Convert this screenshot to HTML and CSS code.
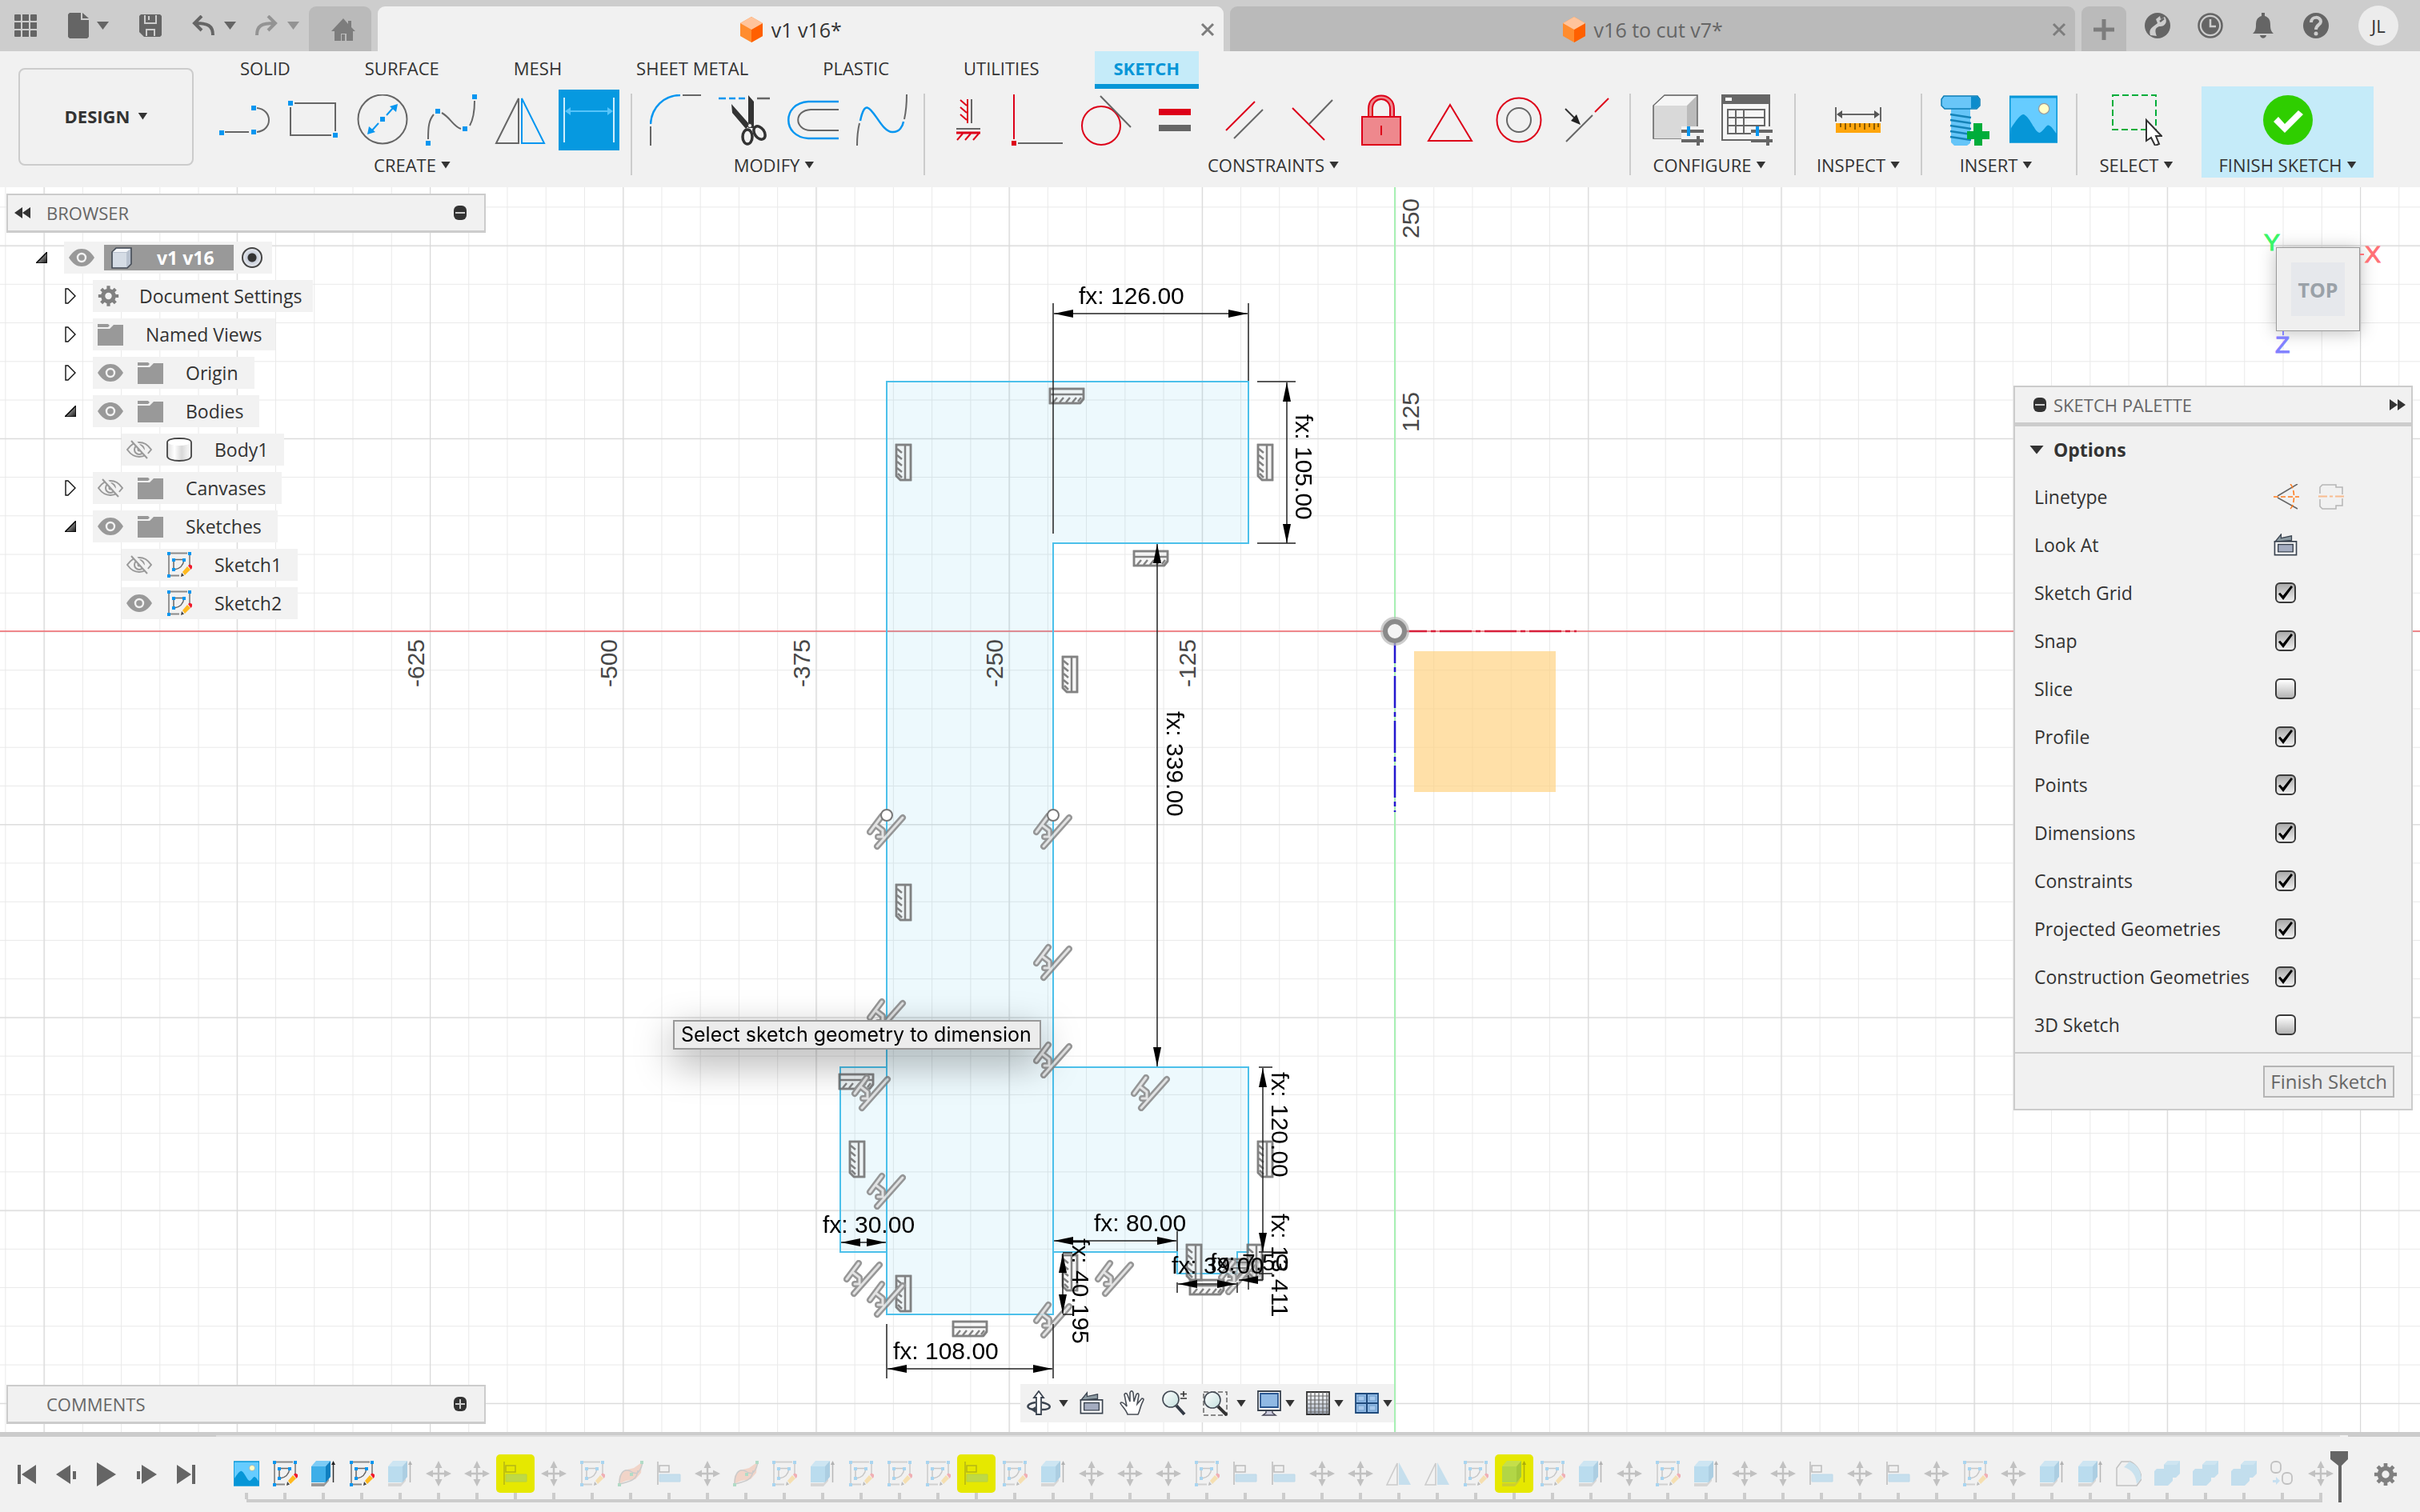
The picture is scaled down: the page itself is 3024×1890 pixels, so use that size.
FILE: index.html
```html
<!DOCTYPE html>
<html lang="en">
<head>
<meta charset="utf-8">
<title>v1 v16*</title>
<link rel="stylesheet" href="styles.css">
</head>
<body>

<svg class="defs" aria-hidden="true">
  <defs>
    <linearGradient id="steel" x1="0" y1="0" x2="0" y2="1"><stop offset="0" stop-color="#fff"/><stop offset="1" stop-color="#aab4c4"/></linearGradient>
    <linearGradient id="glass" x1="0" y1="0" x2="1" y2="1"><stop offset="0" stop-color="#fff"/><stop offset="1" stop-color="#c4e0de"/></linearGradient>
    <linearGradient id="dusk" x1="0" y1="0" x2="1" y2="1"><stop offset="0" stop-color="#eee"/><stop offset="1" stop-color="#111"/></linearGradient>
    <linearGradient id="barrel" x1="0" y1="0" x2="1" y2="0"><stop offset="0" stop-color="#ddd"/><stop offset=".3" stop-color="#fff"/><stop offset=".6" stop-color="#d8d8d8"/><stop offset="1" stop-color="#fff"/></linearGradient>
  </defs>
  <symbol id="i-cube" viewBox="0 0 28 32"><path d="M14 0 28 8V24L14 32 0 24V8Z" fill="#ff8c2e"/><path d="M14 16 28 8V24L14 32Z" fill="#ff6000"/><path d="M14 0 28 8 14 16 0 8Z" fill="#ffc49c"/></symbol>
  <symbol id="i-close" viewBox="0 0 18 18"><path d="M2 2 16 16M16 2 2 16" stroke="#7d7d7d" stroke-width="3"/></symbol>
  <symbol id="i-eye" viewBox="0 0 32 24"><path d="M0 12C5 4 10 1 16 1s11 3 16 11c-5 8-10 11-16 11S5 20 0 12Z" fill="#999"/><circle cx="16" cy="12" r="5" fill="#999" stroke="#f2f2f2" stroke-width="2.4"/></symbol>
  <symbol id="i-eyeoff" viewBox="0 0 32 24"><path d="M1 12C6 5 10 3 16 3s10 2 15 9c-5 7-9 9-15 9S6 19 1 12Z" fill="none" stroke="#999" stroke-width="2"/><path d="M10 12a6 6 0 0 1 12 0 6 6 0 0 1-12 0Z" fill="none" stroke="#999" stroke-width="2"/><circle cx="16" cy="12" r="2.5" fill="#999"/><path d="M8 0 28 22" stroke="#f2f2f2" stroke-width="5"/><path d="M6 1 26 23" stroke="#999" stroke-width="2"/></symbol>
  <symbol id="i-folder" viewBox="0 0 32 28"><path d="M0 1H13L15 3 13 5H0ZM0 7H15L20 2H32V28H0Z" fill="#999"/></symbol>
  <symbol id="i-gear" viewBox="0 0 32 32"><circle cx="16" cy="16" r="8" fill="none" stroke="currentColor" stroke-width="6"/><path d="M16 1V8M16 24v7M1 16H8M24 16h7M5.500 5.500 10 10M22 22l4.500 4.500M5.500 26.500 10 22M22 10l4.500-4.500" stroke="currentColor" stroke-width="5"/></symbol>
  <symbol id="i-open" viewBox="0 0 14 14"><path d="M14 0V14H0Z" fill="url(#dusk)" stroke="#000" stroke-width="1.500"/></symbol>
  <symbol id="i-shut" viewBox="0 0 14 20"><path d="M1 1H4L13 10 4 19H1Z" fill="#fff" stroke="#111" stroke-width="1.400"/></symbol>
  <symbol id="i-component" viewBox="0 0 28 28"><path d="M2 7 7 2H26V22L21 27H2Z" fill="#b9c2cf" stroke="#444b55" stroke-width="1.600"/><path d="M3 8H20V26H3Z" fill="#d5dce5"/><path d="M3 7 8 3H25L20 7Z" fill="#f5f7fa"/></symbol>
  <symbol id="i-body" viewBox="0 0 32 30"><path d="M1 6C1 2 8 1 16 1s15 1 15 5V23c0 4-7 6-15 6S1 27 1 23Z" fill="url(#barrel)" stroke="#444" stroke-width="1.800"/><ellipse cx="16" cy="6" rx="14" ry="4" fill="#fff"/></symbol>
  <symbol id="i-sketch" viewBox="0 0 32 32"><path d="M3 4V30M5 1.500H26M29 4V18M4 29.500H16" stroke="#8a8a8a" stroke-width="1.800" fill="none"/><path d="M9 10V22M11 9.500H21M22 10C21 16 17 21 10 22" stroke="#666" stroke-width="1.500" fill="none"/><g fill="#0696f0"><path d="M1 0h4v4H1zM27 0h4v4h-4zM1 28h4v4H1zM7 8h4v4H7zM20 8h4v4h-4zM7 20h4v4H7z"/></g><path d="M18 31 19 26 22 29.500Z" fill="#444"/><path d="M20 25 26 18 30 22 23 29Z" fill="#ffb91f"/><path d="M27 17 29 15.500 32 17V20L30.500 22Z" fill="#f01a2c"/></symbol>
  <symbol id="i-picture" viewBox="0 0 32 32"><path d="M0 1H32V31H0Z" fill="#66ccff"/><path d="M0 1H32V31H0Z" fill="none" stroke="#0696d7" stroke-width="1.600"/><ellipse cx="23" cy="9" rx="3.500" ry="3.500" fill="#ffffc8" stroke="#999" stroke-width=".6"/><path d="M1 22C5 16 8 12 10 13c4 2 7 12 10 12 3-1 4-5 6-5 3 1 4 5 6 6V31H0Z" fill="#0696d7"/></symbol>
  <symbol id="i-extrude" viewBox="0 0 32 32"><path d="M1 28H17L23 22V25L17 32H1Z" fill="#9a9a9a"/><path d="M1 7 7 0H25L20 7Z" fill="#7ccbf5"/><path d="M1 7H19V27H1Z" fill="#3eaee8"/><path d="M19 7 25 0V20L19 27Z" fill="#0f7fc0"/><path d="M28.500 27V4" stroke="#333" stroke-width="1.500"/><path d="M26 5 28.500 0 31 5Z" fill="#222"/></symbol>
  <symbol id="i-move" viewBox="0 0 32 32"><path d="M16 4V28M4 16H28" stroke="#555" stroke-width="2.400"/><path d="M16 0 20.500 9H11.500ZM16 32 20.500 23H11.500ZM0 16 9 11.500V20.500ZM32 16 23 11.500V20.500Z" fill="#555"/></symbol>
  <symbol id="i-align" viewBox="0 0 32 32"><path d="M2 1V30" stroke="#444" stroke-width="1.500"/><path d="M4 6H16V14H4Z" fill="none" stroke="#444" stroke-width="1.500"/><path d="M4 17H30V26H4Z" fill="#64b9e6" stroke="#4aa5d8"/></symbol>
  <symbol id="i-patch" viewBox="0 0 32 32"><path d="M1 29 2 19 8 12 20 9 30 2 29 15 22 23 10 25Z" fill="#f4946c"/><path d="M2 29C2 18 6 8 16 13 20 16 27 20 31 2M3 29C14 26 24 25 25 12" fill="none" stroke="#777" stroke-width="1.500"/><path d="M0 28h4v4H0zM15 15h4v4h-4zM28 0h4v4h-4z" fill="#22aa66"/></symbol>
  <symbol id="i-mirror" viewBox="0 0 32 32"><path d="M1 30 14 3V30Z" fill="#f6f6f6" stroke="#777" stroke-width="1.600"/><path d="M16 30V2L31 30Z" fill="#64b9e6"/></symbol>
  <symbol id="i-fillet" viewBox="0 0 32 32"><path d="M1 9 7 1H18C26 5 32 14 32 23L26 31H1Z" fill="#eee" stroke="#555" stroke-width="1.500"/><path d="M10 8 17 1C27 5 31 12 32 22L26 29C25 18 20 11 10 8Z" fill="#74c1ea"/></symbol>
  <symbol id="i-combine" viewBox="0 0 32 32"><path d="M0 13 3 10H12V5L17 0H32V16L27 21H23V25L17 31H0Z" fill="#58b4e6"/><path d="M12 5 17 0H32L28 5Z" fill="#80caf2"/></symbol>
  <symbol id="i-paste" viewBox="0 0 32 32"><rect x="2" y="1" width="12" height="14" rx="5" fill="#eee" stroke="#555" stroke-width="1.800"/><rect x="16" y="15" width="12" height="14" rx="5" fill="#eee" stroke="#555" stroke-width="1.800"/><path d="M4 18V24H8V20L13 25 8 30V27H4Z" fill="#6cbcf0"/></symbol>
  <symbol id="i-lookat" viewBox="0 0 32 30"><path d="M2 11 10 1V6L24 3V9Z" fill="#8d9ba3" stroke="#3b4450" stroke-width="1.400"/><path d="M1.500 10.500H30.500V28.500H1.500Z" fill="#fff" stroke="#3b4450" stroke-width="1.800"/><path d="M6 14.500H26V24.500H6Z" fill="#a4acc0" stroke="#3b4450" stroke-width="1.500"/></symbol>
  <symbol id="i-minus" viewBox="0 0 18 18"><rect x="1" y="0" width="16" height="18" rx="6" fill="#333"/><path d="M3 9H15" stroke="#ccc" stroke-width="2"/></symbol>
  <symbol id="i-plusdot" viewBox="0 0 18 18"><rect x="1" y="0" width="16" height="18" rx="6" fill="#333"/><path d="M3 9H15M9 3V15" stroke="#ccc" stroke-width="2"/></symbol>
  <symbol id="i-rewind" viewBox="0 0 20 14"><path d="M10 0V14L0 7ZM20 0V14L10 7Z" fill="#333"/></symbol>
  <symbol id="i-forward" viewBox="0 0 20 14"><path d="M10 0V14L20 7ZM0 0V14L10 7Z" fill="#333"/></symbol>
</svg>

<header class="topbar">
  <div class="tools">
    <button aria-label="Data panel"><svg width="28" height="28"><g fill="#656565"><rect width="8" height="8" rx="1"/><rect x="10" width="8" height="8"/><rect x="20" width="8" height="8" rx="1"/><rect y="10" width="8" height="8"/><rect x="10" y="10" width="8" height="8"/><rect x="20" y="10" width="8" height="8"/><rect y="20" width="8" height="8" rx="1"/><rect x="10" y="20" width="8" height="8"/><rect x="20" y="20" width="8" height="8" rx="1"/></g></svg></button>
    <button aria-label="File"><svg width="28" height="32"><path d="M3 0H17V9H27V30L25 32H3L1 30V2ZM19 0 27 7H19Z" fill="#656565"/></svg><span class="caret big"></span></button>
    <button aria-label="Save"><svg width="28" height="28"><path d="M2 0H26L28 2V26L26 28H6L0 22V2Z" fill="#656565"/><path d="M7 1V11H21V1M12 2V7M9 27V19H19V27" fill="none" stroke="#cdcdcd" stroke-width="2"/></svg></button>
    <div class="undo">
      <button aria-label="Undo"><svg width="28" height="26"><path d="M26 25C26 13 20 10 4 10M12 1 3 10 12 19" fill="none" stroke="#656565" stroke-width="4"/></svg><span class="caret big"></span></button>
      <button class="off" aria-label="Redo"><svg width="28" height="26"><path d="M2 25C2 13 8 10 24 10M16 1 25 10 16 19" fill="none" stroke="#656565" stroke-width="4"/></svg><span class="caret big"></span></button>
    </div>
  </div>
  <nav class="doctabs">
    <button class="doctab home" aria-label="Home"><svg width="30" height="28"><path d="M15 0 21 7V3H25V11L30 16H27V28H19V19H12V28H4V16H0Z" fill="#7d7d7d"/><path d="M13 28V20H17V28Z" fill="#7d7d7d"/></svg></button>
    <div class="doctab active"><span class="title"><svg width="28" height="32"><use href="#i-cube"/></svg>v1 v16*</span><button aria-label="Close"><svg width="18" height="18"><use href="#i-close"/></svg></button></div>
    <div class="doctab"><span class="title"><svg width="28" height="32"><use href="#i-cube"/></svg>v16 to cut v7*</span><button aria-label="Close"><svg width="18" height="18"><use href="#i-close"/></svg></button></div>
    <button class="doctab plus" aria-label="New tab"><svg width="26" height="26"><path d="M13 0V26M0 13H26" stroke="#7d7d7d" stroke-width="5"/></svg></button>
  </nav>
  <div class="account">
    <button aria-label="Extensions"><svg width="32" height="32"><circle cx="16" cy="16" r="16" fill="#656565"/><path d="M7 28C4 20 11 17 16 13L14 8 19 4 20 8 25 5C30 12 24 18 18 17 12 19 13 24 15 29Z" fill="#cdcdcd"/><path d="M19 11 24 7" stroke="#656565" stroke-width="2.500"/></svg></button>
    <button aria-label="Job status"><svg width="32" height="32"><circle cx="16" cy="16" r="14.500" fill="none" stroke="#656565" stroke-width="2.500"/><circle cx="16" cy="16" r="11" fill="#656565"/><path d="M16 8V17H23" fill="none" stroke="#cdcdcd" stroke-width="2.500"/></svg></button>
    <button aria-label="Notifications"><svg width="32" height="32"><path d="M14 0H18V4C24 6 25 10 25 16 25 22 27 24 29 26H3C5 24 7 22 7 16 7 10 8 6 14 4ZM12 28H20C19 33 13 33 12 28Z" fill="#656565"/></svg></button>
    <button aria-label="Help"><svg width="32" height="32"><circle cx="16" cy="16" r="16" fill="#656565"/><path d="M10 12C10 4 22 4 22 11 22 15 16 15 16 21" fill="none" stroke="#cdcdcd" stroke-width="4"/><circle cx="16" cy="26" r="2.500" fill="#cdcdcd"/></svg></button>
    <button class="avatar">JL</button>
  </div>
</header>

<section class="ribbon">
  <button class="design">DESIGN <span class="caret"></span></button>
  <div class="ribbon-main">
    <nav class="tabs">
      <a href="#solid">SOLID</a><a href="#surface">SURFACE</a><a href="#mesh">MESH</a><a href="#sheet">SHEET METAL</a><a href="#plastic">PLASTIC</a><a href="#utilities">UTILITIES</a><a href="#sketch" class="on">SKETCH</a>
    </nav>
    <div class="groups">
      <div class="group create">
        <div class="icons">
          <button aria-label="Line"><svg width="64" height="64" fill="none" stroke="#666" stroke-width="2"><path d="M7 47H37M47 47C67 45 67 19 47 17"/><path d="M0 45h6v6H0zM40 44h6v6h-6zM40 14h6v6h-6z" fill="#0696f0" stroke="none"/></svg></button>
          <button aria-label="Rectangle"><svg width="64" height="64" fill="none" stroke="#666" stroke-width="2"><path d="M8 11H59V46M3 16V51H54"/><path d="M0 8h6v6H0zM56 48h6v6h-6z" fill="#0696f0" stroke="none"/></svg></button>
          <button aria-label="Circle"><svg width="64" height="64" fill="none" stroke="#666" stroke-width="2"><circle cx="32" cy="31" r="30.500"/><path d="M37 26 46 16M27 36 18 46" stroke="#0696f0"/><path d="M29 28h6v6h-6zM51 12 49 22 41 15ZM13 50 15 40 23 47Z" fill="#0696f0" stroke="none"/></svg></button>
          <button aria-label="Spline"><svg width="64" height="64" fill="none" stroke="#666" stroke-width="2"><path d="M3 56C3 40 4 32 10 25M20 23C31 29 34 40 44 43M55 39C60 30 61 18 61 8"/><path d="M0 58h6v6H0zM12 18h6v6h-6zM46 40h6v6h-6zM58 0h6v6h-6z" fill="#0696f0" stroke="none"/></svg></button>
          <button aria-label="Mirror"><svg width="64" height="64" fill="none" stroke="#666" stroke-width="2"><path d="M2 61 30 5V61Z"/><path d="M34 5V61H62Z" stroke="#0696f0"/></svg></button>
          <button class="picked" aria-label="Sketch dimension"><svg width="64" height="64" fill="none"><path d="M1 4V60M63 4V60" stroke="#cfeefc" stroke-width="2"/><path d="M6 21H58" stroke="#56c4fa" stroke-width="2"/><path d="M2 21 9 16V26ZM62 21 55 16V26Z" fill="#56c4fa"/></svg></button>
        </div>
        <button class="label">CREATE <span class="caret"></span></button>
      </div>
      <span class="sep"></span>
      <div class="group modify">
        <div class="icons">
          <button aria-label="Fillet"><svg width="64" height="64" fill="none" stroke="#666" stroke-width="2"><path d="M1 64V40M41 1H64"/><path d="M1 37C2 16 18 1 38 1" stroke="#0696f0" stroke-width="2.500"/></svg></button>
          <button aria-label="Trim"><svg width="64" height="64" fill="none" stroke="#333"><path d="M0 5H9M13 5H21M25 5H33" stroke="#0696f0" stroke-width="2.500"/><path d="M48 5H64" stroke="#666" stroke-width="2.500"/><path d="M16 12 17 23 34 43 39 38ZM37 1 44 9V42H37Z" fill="#333" stroke="none"/><ellipse cx="36" cy="53" rx="6" ry="9" stroke-width="3.500"/><ellipse cx="51" cy="48" rx="6" ry="9" stroke-width="3.500" transform="rotate(-35 51 48)"/><circle cx="39" cy="39" r="2.500" fill="#fff" stroke-width="1"/></svg></button>
          <button aria-label="Offset"><svg width="64" height="64" fill="none" stroke="#666" stroke-width="2"><path d="M64 19H29C8 20 8 44 29 45H64"/><path d="M64 9H26C-7 11-7 53 26 55H64" stroke="#0696f0" stroke-width="2.500"/></svg></button>
          <button aria-label="Change curvature"><svg width="64" height="64" fill="none" stroke="#666" stroke-width="2"><path d="M1 64C1 52 2 44 4 36M60 31C62 22 63 12 63 0"/><path d="M5 33C14-12 28 50 46 47 54 47 58 40 59 34" stroke="#0696f0" stroke-width="2.500"/></svg></button>
        </div>
        <button class="label">MODIFY <span class="caret"></span></button>
      </div>
      <span class="sep"></span>
      <div class="group constraints">
        <div class="icons">
          <button aria-label="Horizontal/Vertical"><svg width="64" height="64" fill="none" stroke="#dd0019" stroke-width="2"><path d="M31 6V36M22 7 30 14M22 16 30 23M22 25 30 32"/><path d="M36 6V36M17 43H47" stroke="#666"/><path d="M17 48H47" stroke-width="3"/><path d="M25 49 18 57M35 49 28 57M45 49 38 57"/></svg></button>
          <button aria-label="Perpendicular"><svg width="64" height="64" fill="none" stroke="#dd0019" stroke-width="2"><path d="M3 0V56"/><path d="M8 61H64" stroke="#666"/><path d="M0 58h6v6H0z" fill="#dd0019" stroke="none"/></svg></button>
          <button aria-label="Tangent"><svg width="64" height="64" fill="none" stroke="#dd0019" stroke-width="2"><circle cx="26" cy="39" r="24"/><path d="M25 2 63 41" stroke="#666"/></svg></button>
          <button aria-label="Equal"><svg width="64" height="64"><path d="M12 18H52V26H12Z" fill="#dd0019"/><path d="M12 38H52V46H12Z" fill="#666"/></svg></button>
          <button aria-label="Parallel"><svg width="64" height="64" fill="none" stroke-width="2"><path d="M10 45 46 9" stroke="#dd0019"/><path d="M20 55 56 19" stroke="#666"/></svg></button>
          <button aria-label="Midpoint"><svg width="64" height="64" fill="none" stroke-width="2"><path d="M7 17 47 57" stroke="#dd0019"/><path d="M28 37 57 7" stroke="#666"/></svg></button>
          <button aria-label="Fix"><svg width="64" height="64" stroke="#dd0019" stroke-width="2"><path d="M16 28V18C16-4 48-4 48 18V28H43V18C43 2 21 2 21 18V28Z" fill="#ee888d"/><path d="M8 28H56V63H8Z" fill="#ee888d"/><path d="M32 39V51"/></svg></button>
          <button aria-label="Symmetry"><svg width="64" height="64" fill="none" stroke="#dd0019" stroke-width="2"><path d="M32 13 59 58H5Z"/></svg></button>
          <button aria-label="Concentric"><svg width="64" height="64" fill="none" stroke="#dd0019" stroke-width="2"><circle cx="32" cy="32" r="27.500"/><circle cx="32" cy="32" r="15" stroke="#666"/></svg></button>
          <button aria-label="Coincident"><svg width="64" height="64" fill="none" stroke="#666" stroke-width="2"><path d="M5 59 38 26"/><path d="M41 22 58 5" stroke="#dd0019"/><path d="M4 18 18 32" stroke="#333"/><path d="M23 38 11 33 18 25Z" fill="#222" stroke="none"/></svg></button>
        </div>
        <button class="label">CONSTRAINTS <span class="caret"></span></button>
      </div>
      <span class="sep"></span>
      <div class="group configure">
        <div class="icons">
          <button aria-label="Configure"><svg width="64" height="64" fill="none"><path d="M1 14 15 1H56V42L43 55H1Z" fill="#bbb" stroke="#666" stroke-width="1.500"/><path d="M2 14H43V55H2Z" fill="#d9d9d9"/><path d="M2 14 15 2H55L43 14Z" fill="#f6f6f6"/><path d="M36 40H64V64H36Z" fill="#f1f1f1"/><path d="M36 46H64M36 58H64M57 52V64" stroke="#666" stroke-width="4"/><path d="M45 40V52" stroke="#0696f0" stroke-width="4"/></svg></button>
          <button aria-label="Configuration table"><svg width="64" height="64" fill="none"><path d="M1 1H60V57H1Z" fill="#f6f6f6" stroke="#666" stroke-width="2"/><path d="M0 0H61V12H0Z" fill="#666"/><path d="M5 4h8v4H5z" fill="#fff"/><path d="M8 19H54V49H8ZM8 29H54M8 39H54M18 19V49M28 19V49" stroke="#666" stroke-width="2"/><path d="M37 40H64V64H37Z" fill="#f1f1f1"/><path d="M37 46H64M37 58H64M58 52V64" stroke="#666" stroke-width="4"/><path d="M45 40V52" stroke="#0696f0" stroke-width="4"/></svg></button>
        </div>
        <button class="label">CONFIGURE <span class="caret"></span></button>
      </div>
      <span class="sep"></span>
      <div class="group inspect">
        <div class="icons">
          <button aria-label="Measure"><svg width="64" height="64" fill="none" stroke="#666" stroke-width="2"><path d="M4 16V34M60 16V34M8 25H56"/><path d="M5 25 12 20V30ZM59 25 52 20V30Z" fill="#555" stroke="none"/><path d="M4 36H60V48H4Z" fill="#ffa60d" stroke="none"/><path d="M10 36V41M16 36V44M22 36V41M28 36V44M34 36V41M40 36V44M46 36V41M52 36V44M57 36V41" stroke="#8a5a00"/></svg></button>
        </div>
        <button class="label">INSPECT <span class="caret"></span></button>
      </div>
      <span class="sep"></span>
      <div class="group insert">
        <div class="icons">
          <button aria-label="Insert fastener"><svg width="64" height="64"><path d="M15 16H39V61L35 64H19L15 60Z" fill="#65c5f8"/><path d="M14 25 40 29M14 32 40 36M14 39 40 43M14 46 40 50M14 53 40 57" stroke="#1583b8" stroke-width="2.500"/><path d="M6 2H48L51 6V14L47 18H7L3 14V6Z" fill="#69c6f8" stroke="#0d7db5" stroke-width="1.500"/><path d="M40 3H48L50 6V14L47 17H40Z" fill="#0d8ccc"/><path d="M43 36H54V46H63V56H54V64H44V56H35V46H43Z" fill="#00ad3a"/></svg></button>
          <button aria-label="Canvas"><svg width="64" height="64"><use href="#i-picture" x="2" width="60" height="62"/></svg></button>
        </div>
        <button class="label">INSERT <span class="caret"></span></button>
      </div>
      <span class="sep"></span>
      <div class="group select">
        <div class="icons">
          <button aria-label="Select"><svg width="64" height="64"><path d="M2 1H56V44H2Z" fill="none" stroke="#00ad3a" stroke-width="2" stroke-dasharray="8 4"/><path d="M44 32V58L50 54 55 64 60 62 56 52H63Z" fill="#fff" stroke="#333" stroke-width="2"/></svg></button>
        </div>
        <button class="label">SELECT <span class="caret"></span></button>
      </div>
      <div class="group finish">
        <div class="icons">
          <button aria-label="Finish sketch"><svg width="64" height="64"><circle cx="32" cy="32" r="31" fill="#2fce00"/><path d="M14 34 20 28 28 37 45 20 51 25 28 48Z" fill="#fff"/></svg></button>
        </div>
        <button class="label">FINISH SKETCH <span class="caret"></span></button>
      </div>
    </div>
  </div>
</section>

<main class="viewport">
  <svg class="drawing">
    <defs>
      <pattern id="minor" x="1743" y="789" width="48.240" height="48.240" patternUnits="userSpaceOnUse"><path d="M0 0H48.240M0 0V48.240" stroke="#e9e9e9" stroke-width="2"/></pattern>
      <pattern id="major" x="1743" y="789" width="241.200" height="241.200" patternUnits="userSpaceOnUse"><path d="M0 0H241.200M0 0V241.200" stroke="#d9d9d9" stroke-width="2.500"/></pattern>
      <marker id="tip" markerWidth="24" markerHeight="10" refX="24" refY="5" orient="auto-start-reverse" markerUnits="userSpaceOnUse"><path d="M24 5 0 0V10Z"/></marker>
      <g id="hz"><path d="M-21-9H21V3L16 9H-21Z" fill="#eee" fill-opacity=".6"/><path d="M-21-9H21V-2H-21ZM21-2V4L17 9H-21V-2M-17 8 -12 2M-9 8-4 2M-1 8 4 2M7 8 12 2M14 7 18 2"/></g>
      <g id="vt"><path d="M9-22V22H-4L-9 17V-22Z" fill="#eee" fill-opacity=".6"/><path d="M9-22V22H2V-22ZM2 22H-4L-9 17V-22H2M-8-17-2-12M-8-9-2-4M-8-1-2 4M-8 7-2 12M-7 14-2 19"/></g>
      <g id="co" stroke-linecap="round" stroke-linejoin="round"><path d="M-20 3-5-17M-13-6-4 1V9H-10M-11 21 21-15" stroke="#858585" stroke-width="8"/><path d="M-20 3-5-17M-13-6-4 1V9H-10M-11 21 21-15" stroke="#dedede" stroke-width="3"/></g>
    </defs>
    <g transform="translate(0 -234)">
      <rect y="234" width="100%" height="100%" fill="url(#minor)"/>
      <rect y="234" width="100%" height="100%" fill="url(#major)"/>
      <path d="M0 789H4000" stroke="#f0666b" stroke-width="1.500"/>
      <path d="M1743 234V4000" stroke="#a8f0b4" stroke-width="2"/>

      <rect x="1767" y="814" width="177" height="176" fill="#ffd07a" fill-opacity=".65"/>
      <path d="M1743 789H1970" stroke="#d81f3a" stroke-width="2.500" stroke-dasharray="40 5 6 5"/>
      <path d="M1743 789V1015" stroke="#2418d0" stroke-width="2.500" stroke-dasharray="40 5 6 5"/>
      <circle cx="1743" cy="789" r="18" fill="#b8b8b8" fill-opacity=".7"/>
      <circle cx="1743" cy="789" r="12" fill="#f4f4f4" stroke="#8a8a8a" stroke-width="6"/>

      <g fill="#35b8e8" fill-opacity=".09">
        <path d="M1108 477H1560V679H1316V1643H1108Z"/>
        <path d="M1050 1334H1108V1565H1050Z"/>
        <path d="M1316 1334H1560V1565H1546V1592H1471V1565H1316Z"/>
      </g>
      <path d="M1108 477H1560V679H1316V1643H1108ZM1108 1334H1050V1565H1108M1316 1334H1560V1565H1546V1592H1471V1565H1316" fill="none" stroke="#4cc0ea" stroke-width="2"/>

      <g class="axis">
        <text transform="translate(530 859) rotate(-90)">-625</text>
        <text transform="translate(771 859) rotate(-90)">-500</text>
        <text transform="translate(1012 859) rotate(-90)">-375</text>
        <text transform="translate(1253 859) rotate(-90)">-250</text>
        <text transform="translate(1494 859) rotate(-90)">-125</text>
        <text transform="translate(1773 298) rotate(-90)">250</text>
        <text transform="translate(1773 540) rotate(-90)">125</text>
      </g>

      <g fill="none" stroke="#6c6c6c" stroke-width="2.500" opacity=".85">
        <use href="#hz" x="1333" y="495"/><use href="#hz" x="1438" y="698"/><use href="#hz" x="1070" y="1352"/><use href="#hz" x="1212" y="1661"/><use href="#hz" x="1508" y="1609"/><use href="#hz" x="1552" y="1583"/><use href="#hz" x="1556" y="1587"/>
        <use href="#vt" x="1129" y="578"/><use href="#vt" x="1581" y="578"/><use href="#vt" x="1337" y="843"/><use href="#vt" x="1129" y="1128"/><use href="#vt" x="1071" y="1449"/><use href="#vt" x="1581" y="1449"/><use href="#vt" x="1129" y="1617"/><use href="#vt" x="1337" y="1591"/><use href="#vt" x="1492" y="1578"/><use href="#vt" x="1568" y="1578"/>
        <use href="#co" x="1107" y="1037"/><use href="#co" x="1315" y="1037"/><use href="#co" x="1315" y="1201"/><use href="#co" x="1107" y="1269"/><use href="#co" x="1315" y="1323"/><use href="#co" x="1437" y="1364"/><use href="#co" x="1088" y="1364"/><use href="#co" x="1107" y="1487"/><use href="#co" x="1078" y="1596"/><use href="#co" x="1107" y="1622"/><use href="#co" x="1392" y="1596"/><use href="#co" x="1315" y="1648"/><use href="#co" x="1546" y="1594"/>
      </g>
      <g fill="#fff" stroke="#777" stroke-width="2"><circle cx="1108" cy="1019" r="7"/><circle cx="1316" cy="1019" r="7"/></g>

      <g stroke="#222" stroke-width="1.500" fill="none">
        <path d="M1316 379V667M1560 379V476M1571 477H1619M1571 679H1619M1108 1655V1723M1316 1655V1723M1471 1539V1564M1328 1566H1340M1328 1643H1340M1573 1334H1590M1573 1565H1590M1573 1592H1590M1471 1603V1616M1546 1603V1616M1560 1594V1612"/>
        <g marker-start="url(#tip)" marker-end="url(#tip)">
          <path d="M1317 392H1559"/><path d="M1608 478V679"/><path d="M1446 680V1333"/><path d="M1051 1553H1107"/><path d="M1317 1551H1470"/><path d="M1328 1567V1642"/><path d="M1109 1711H1315"/><path d="M1578 1335V1565"/><path d="M1472 1605H1545"/>
        </g>
        <path d="M1578 1600H1548" marker-end="url(#tip)"/><path d="M1578 1600V1568" />
      </g>

      <g class="dims">
        <text x="1348" y="380">fx: 126.00</text>
        <text transform="translate(1619 518) rotate(90)">fx: 105.00</text>
        <text transform="translate(1458 889) rotate(90)">fx: 339.00</text>
        <text x="1028" y="1541">fx: 30.00</text>
        <text x="1367" y="1539">fx: 80.00</text>
        <text x="1116" y="1699">fx: 108.00</text>
        <text transform="translate(1340 1548) rotate(90)">fx: 40.195</text>
        <text transform="translate(1589 1340) rotate(90)">fx: 120.00</text>
        <text transform="translate(1589 1517) rotate(90)">fx: 13.411</text>
        <text x="1464" y="1592">fx: 39.00</text>
        <text x="1512" y="1588">fx: 7.50</text>
      </g>
    </g>
  </svg>

  <div class="tooltip" role="tooltip">Select sketch geometry to dimension</div>

  <div class="viewcube">
    <span class="ax y">Y</span><span class="ax x">X</span><span class="ax z">Z</span>
    <button>TOP</button>
  </div>

  <aside class="browser">
    <div class="bar"><button aria-label="Collapse"><svg width="20" height="14"><use href="#i-rewind"/></svg></button><h2>BROWSER</h2><button class="end" aria-label="Hide"><svg width="18" height="18"><use href="#i-minus"/></svg></button></div>
    <ul class="tree">
      <li class="l0"><svg width="14" height="14"><use href="#i-open"/></svg><div class="row root"><svg width="32" height="24"><use href="#i-eye"/></svg><b><svg width="28" height="28"><use href="#i-component"/></svg>v1 v16</b><input type="radio" checked aria-label="Activate v1 v16"></div></li>
      <li class="l1"><svg width="14" height="20"><use href="#i-shut"/></svg><div class="row doc"><svg class="gear" width="27" height="28"><use href="#i-gear"/></svg>Document Settings</div></li>
      <li class="l1"><svg width="14" height="20"><use href="#i-shut"/></svg><div class="row views"><svg width="32" height="28"><use href="#i-folder"/></svg>Named Views</div></li>
      <li class="l1"><svg width="14" height="20"><use href="#i-shut"/></svg><div class="row"><svg width="32" height="24"><use href="#i-eye"/></svg><svg width="32" height="28"><use href="#i-folder"/></svg><span>Origin</span></div></li>
      <li class="l1"><svg width="14" height="14"><use href="#i-open"/></svg><div class="row"><svg width="32" height="24"><use href="#i-eye"/></svg><svg width="32" height="28"><use href="#i-folder"/></svg><span>Bodies</span></div></li>
      <li class="l2"><div class="row"><svg width="32" height="24"><use href="#i-eyeoff"/></svg><svg width="32" height="30"><use href="#i-body"/></svg><span>Body1</span></div></li>
      <li class="l1"><svg width="14" height="20"><use href="#i-shut"/></svg><div class="row"><svg width="32" height="24"><use href="#i-eyeoff"/></svg><svg width="32" height="28"><use href="#i-folder"/></svg><span>Canvases</span></div></li>
      <li class="l1"><svg width="14" height="14"><use href="#i-open"/></svg><div class="row"><svg width="32" height="24"><use href="#i-eye"/></svg><svg width="32" height="28"><use href="#i-folder"/></svg><span>Sketches</span></div></li>
      <li class="l2"><div class="row"><svg width="32" height="24"><use href="#i-eyeoff"/></svg><svg width="32" height="32"><use href="#i-sketch"/></svg><span>Sketch1</span></div></li>
      <li class="l2"><div class="row"><svg width="32" height="24"><use href="#i-eye"/></svg><svg width="32" height="32"><use href="#i-sketch"/></svg><span>Sketch2</span></div></li>
    </ul>
  </aside>

  <aside class="palette">
    <div class="bar"><button aria-label="Hide"><svg width="18" height="18"><use href="#i-minus"/></svg></button><h2>SKETCH PALETTE</h2><button class="end" aria-label="Collapse"><svg width="20" height="14"><use href="#i-forward"/></svg></button></div>
    <div class="options">
      <h3><span class="caret wide"></span>Options</h3>
      <div class="opt"><span>Linetype</span><span class="pair">
        <button aria-label="Construction"><svg width="32" height="32" fill="none" stroke-width="1.500"><path d="M30 0 5 15M5 17 30 31" stroke="#666"/><path d="M0 16H32M21 0C27 6 27 26 21 31" stroke="#ff7a1a" stroke-dasharray="6 3"/></svg></button>
        <button aria-label="Centerline"><svg width="32" height="32" fill="none" stroke-width="1.500"><path d="M2 12V4L5 1H22V4H30V13M2 19V28L5 31H22V27H30V18" stroke="#b5b5b5"/><path d="M0 15.500H32" stroke="#f8bc90" stroke-width="2" stroke-dasharray="11 3 4 3"/></svg></button></span></div>
      <div class="opt"><span>Look At</span><button aria-label="Look At"><svg width="30" height="28"><use href="#i-lookat"/></svg></button></div>
      <label class="opt"><span>Sketch Grid</span><input type="checkbox" checked></label>
      <label class="opt"><span>Snap</span><input type="checkbox" checked></label>
      <label class="opt"><span>Slice</span><input type="checkbox"></label>
      <label class="opt"><span>Profile</span><input type="checkbox" checked></label>
      <label class="opt"><span>Points</span><input type="checkbox" checked></label>
      <label class="opt"><span>Dimensions</span><input type="checkbox" checked></label>
      <label class="opt"><span>Constraints</span><input type="checkbox" checked></label>
      <label class="opt"><span>Projected Geometries</span><input type="checkbox" checked></label>
      <label class="opt"><span>Construction Geometries</span><input type="checkbox" checked></label>
      <label class="opt"><span>3D Sketch</span><input type="checkbox"></label>
    </div>
    <div class="foot"><button>Finish Sketch</button></div>
  </aside>

  <div class="comments bar"><h2>COMMENTS</h2><button class="end" aria-label="Add comment"><svg width="18" height="18"><use href="#i-plusdot"/></svg></button></div>

  <div class="navbar">
    <button class="drop" aria-label="Orbit"><svg width="30" height="32" fill="none" stroke="#3b4450" stroke-width="1.800"><path d="M11 15C-2 17-2 24 12 24" stroke-width="2.500"/><path d="M19 15C33 18 31 24 19 24" stroke-width="2.500"/><path d="M15 1 21 9H18V30H12V9H9Z" fill="#fff"/><path d="M11 20 5 24 11 28Z" fill="#3b4450" stroke="none"/></svg><span class="caret"></span></button>
    <button aria-label="Look at"><svg width="30" height="30"><use href="#i-lookat"/></svg></button>
    <button aria-label="Pan"><svg width="32" height="32"><path d="M10 30C8 24 3 20 1 16 2 14 5 15 9 20L6 5C7 3 9 3 10 6L13 14 13 3C14 0 16 0 17 3L18 14 21 5C23 3 24 4 24 6L22 17 28 10C31 10 30 12 29 14 26 19 25 27 23 30Z" fill="#fff" stroke="#4a4f57" stroke-width="1.600"/></svg></button>
    <button aria-label="Zoom"><svg width="32" height="32"><path d="M19 19 29 30" stroke="#333a45" stroke-width="4"/><circle cx="12" cy="11" r="10" fill="url(#glass)" stroke="#444b55" stroke-width="1.600"/><path d="M28 1V8M24 4.500H32M24 10H32" stroke="#333" stroke-width="1.600"/></svg></button>
    <button class="drop far" aria-label="Zoom window"><svg width="32" height="32"><path d="M1 2H30V31H1Z" fill="none" stroke="#666" stroke-width="1.500" stroke-dasharray="6 3"/><path d="M19 20 30 31" stroke="#333" stroke-width="4"/><circle cx="12" cy="12" r="10" fill="url(#glass)" stroke="#444b55" stroke-width="1.600"/></svg><span class="caret"></span></button>
    <button class="drop" aria-label="Display settings"><svg width="30" height="32"><path d="M11 25H19V28L23 31H7L11 28Z" fill="#ccd" stroke="#445" stroke-width="1.400"/><path d="M1 1H29V25H1Z" fill="#fff" stroke="#3b4450" stroke-width="1.800"/><path d="M4 4H26V21H4Z" fill="#90b9e4" stroke="#2a5690" stroke-width="1.800"/></svg><span class="caret"></span></button>
    <button class="drop" aria-label="Grid"><svg width="30" height="30"><path d="M1 1H29V29H1Z" fill="url(#steel)" stroke="#333" stroke-width="1.800"/><path d="M6 1V29M11 1V29M16 1V29M21 1V29M26 1V29M1 6H29M1 11H29M1 16H29M1 21H29M1 26H29" stroke="#666" stroke-width="1.200"/></svg><span class="caret"></span></button>
    <button class="drop" aria-label="Viewports"><svg width="30" height="26"><path d="M1 1H29V25H1Z" fill="#90b9e4" stroke="#1f4a7c" stroke-width="1.800"/><path d="M15 1V25M1 13H29" stroke="#1f4a7c" stroke-width="2"/><path d="M4 4H12V10H4ZM18 4H26V10H18ZM4 16H12V22H4ZM18 16H26V22H18Z" fill="#a6c8ec" stroke="#6c9ccc"/></svg><span class="caret"></span></button>
  </div>
</main>

<footer class="timeline">
  <div class="transport">
    <button aria-label="First"><svg width="24" height="24"><path d="M1 0h4v24H1zM24 0V24L6 12Z" fill="#656565"/></svg></button>
    <button aria-label="Back"><svg width="26" height="24"><path d="M18 0V24L0 12ZM21 8h4v10h-4z" fill="#656565"/></svg></button>
    <button aria-label="Play"><svg width="26" height="30"><path d="M1 0 25 15 1 30Z" fill="#656565"/></svg></button>
    <button aria-label="Forward"><svg width="26" height="24"><path d="M7 0V24L26 12ZM1 8h4v10H1z" fill="#656565"/></svg></button>
    <button aria-label="Last"><svg width="24" height="24"><path d="M19 0h4v24h-4zM0 0V24L18 12Z" fill="#656565"/></svg></button>
  </div>
  <ol class="features">
    <li class="live"><svg><use href="#i-picture"/></svg></li>
    <li class="live"><svg><use href="#i-sketch"/></svg></li>
    <li class="live"><svg><use href="#i-extrude"/></svg></li>
    <li class="live"><svg><use href="#i-sketch"/></svg></li>
    <li><svg><use href="#i-extrude"/></svg></li>
    <li><svg><use href="#i-move"/></svg></li>
    <li><svg><use href="#i-move"/></svg></li>
    <li class="warn"><svg><use href="#i-align"/></svg></li>
    <li><svg><use href="#i-move"/></svg></li>
    <li><svg><use href="#i-sketch"/></svg></li>
    <li><svg><use href="#i-patch"/></svg></li>
    <li><svg><use href="#i-align"/></svg></li>
    <li><svg><use href="#i-move"/></svg></li>
    <li><svg><use href="#i-patch"/></svg></li>
    <li><svg><use href="#i-sketch"/></svg></li>
    <li><svg><use href="#i-extrude"/></svg></li>
    <li><svg><use href="#i-sketch"/></svg></li>
    <li><svg><use href="#i-sketch"/></svg></li>
    <li><svg><use href="#i-sketch"/></svg></li>
    <li class="warn"><svg><use href="#i-align"/></svg></li>
    <li><svg><use href="#i-sketch"/></svg></li>
    <li><svg><use href="#i-extrude"/></svg></li>
    <li><svg><use href="#i-move"/></svg></li>
    <li><svg><use href="#i-move"/></svg></li>
    <li><svg><use href="#i-move"/></svg></li>
    <li><svg><use href="#i-sketch"/></svg></li>
    <li><svg><use href="#i-align"/></svg></li>
    <li><svg><use href="#i-align"/></svg></li>
    <li><svg><use href="#i-move"/></svg></li>
    <li><svg><use href="#i-move"/></svg></li>
    <li><svg><use href="#i-mirror"/></svg></li>
    <li><svg><use href="#i-mirror"/></svg></li>
    <li><svg><use href="#i-sketch"/></svg></li>
    <li class="warn"><svg><use href="#i-extrude"/></svg></li>
    <li><svg><use href="#i-sketch"/></svg></li>
    <li><svg><use href="#i-extrude"/></svg></li>
    <li><svg><use href="#i-move"/></svg></li>
    <li><svg><use href="#i-sketch"/></svg></li>
    <li><svg><use href="#i-extrude"/></svg></li>
    <li><svg><use href="#i-move"/></svg></li>
    <li><svg><use href="#i-move"/></svg></li>
    <li><svg><use href="#i-align"/></svg></li>
    <li><svg><use href="#i-move"/></svg></li>
    <li><svg><use href="#i-align"/></svg></li>
    <li><svg><use href="#i-move"/></svg></li>
    <li><svg><use href="#i-sketch"/></svg></li>
    <li><svg><use href="#i-move"/></svg></li>
    <li><svg><use href="#i-extrude"/></svg></li>
    <li><svg><use href="#i-extrude"/></svg></li>
    <li><svg><use href="#i-fillet"/></svg></li>
    <li><svg><use href="#i-combine"/></svg></li>
    <li><svg><use href="#i-combine"/></svg></li>
    <li><svg><use href="#i-combine"/></svg></li>
    <li><svg><use href="#i-paste"/></svg></li>
    <li><svg><use href="#i-move"/></svg></li>
  </ol>
  <svg class="marker" width="22" height="64"><path d="M0 0H22V10L14 18V64H10V18L0 10Z" fill="#656565"/></svg>
  <button class="prefs" aria-label="Timeline settings"><svg width="30" height="30"><use href="#i-gear"/></svg></button>
</footer>
</body>
</html>
```
FILE: styles.css
```css
* { box-sizing: border-box; }
body {
  margin: 0;
  min-height: 100vh;
  display: flex;
  flex-direction: column;
  background: #fff;
  color: #333;
  font: 22px/30px "Open Sans", "Noto Sans", sans-serif;
}
button { border: 0; padding: 0; background: none; font: inherit; color: inherit; }
svg { display: block; flex: none; }
h2, h3, ul, ol { margin: 0; padding: 0; font: inherit; list-style: none; }
.defs { position: absolute; width: 0; height: 0; }

.caret {
  flex: none;
  width: 12px;
  height: 9px;
  background: #333;
  clip-path: polygon(0 0, 100% 0, 50% 100%);
}
.caret.big { width: 15px; height: 10px; background: #656565; }
.caret.wide { width: 18px; height: 11px; }

/* top bar */
.topbar { display: flex; height: 64px; background: #cdcdcd; }
.tools { display: flex; align-items: center; gap: 38px; padding: 0 12px 0 18px; }
.tools button { display: flex; align-items: center; gap: 9px; }
.undo { display: flex; gap: 24px; }
.undo button { gap: 12px; }
.off { opacity: .55; }
.doctabs { flex: 1; display: flex; gap: 8px; padding-top: 8px; }
.doctab {
  flex: 1;
  display: flex;
  align-items: center;
  padding: 2px 8px 0;
  border-radius: 9px 9px 0 0;
  background: #bababa;
  color: #656565;
  font-size: 25px;
}
.doctab.active { background: #f1f1f1; color: #333; }
.doctab button { width: 24px; display: flex; justify-content: center; }
.doctab .title { flex: 1; display: flex; justify-content: center; align-items: center; gap: 11px; }
.doctab.home { flex: 0 0 78px; justify-content: center; padding-left: 16px; }
.doctab.plus { flex: 0 0 56px; justify-content: center; }
.account { display: flex; align-items: center; gap: 34px; padding: 0 27px 0 23px; }
.avatar { width: 50px; height: 50px; margin-left: 3px; border-radius: 50%; background: #ececec; }

/* ribbon */
.ribbon { display: flex; height: 170px; background: #f1f1f1; }
.design {
  display: flex;
  align-items: center;
  justify-content: center;
  gap: 10px;
  width: 219px;
  height: 122px;
  margin: 21px 0 0 23px;
  padding-bottom: 2px;
  border: 2px solid #ccc;
  border-radius: 8px;
  font-weight: 700;
}
.ribbon-main { flex: 1; }
.tabs { display: flex; gap: 45px; padding-left: 34px; }
.tabs a { padding: 6px 24px 11px; color: inherit; text-decoration: none; }
.tabs .on {
  padding-bottom: 5px;
  border-bottom: 6px solid #0696d7;
  background: #c5ebf9;
  color: #0696d7;
  font-weight: 700;
}
.groups { display: flex; }
.group { display: flex; flex-direction: column; align-items: center; gap: 3px; padding-top: 1px; }
.icons { display: flex; gap: 10px; }
.icons button { width: 76px; height: 76px; display: flex; align-items: center; justify-content: center; }
.icons .picked { background: #0699e0; }
.label { display: flex; align-items: center; gap: 6px; white-space: nowrap; }
.sep { width: 2px; height: 102px; margin-top: 6px; background: #ccc; }
.create { padding-left: 26px; padding-right: 14px; }
.modify, .constraints { padding-left: 16px; padding-right: 14px; }
.create .label, .modify .label, .constraints .label { margin-right: 12px; }
.configure { width: 204px; }
.configure .label { margin-right: 8px; }
.inspect { width: 156px; }
.insert { width: 192px; }
.insert .label { margin-right: 8px; }
.select { width: 155px; padding-right: 8px; }
.finish { width: 215px; height: 114px; margin-top: -3px; padding-top: 4px; background: #c5ebf9; }

/* drawing area */
.viewport { position: relative; flex: 1; min-height: 1200px; overflow: hidden; background: #fff; }
.drawing { position: absolute; inset: 0; width: 100%; height: 100%; }
.drawing text { font: 30px "Liberation Sans", Arial, sans-serif; }
.axis { fill: #484848; }
.dims { fill: #000; }
.tooltip {
  position: absolute;
  left: 841px;
  top: 1041px;
  padding: 0 10px 0 8px;
  border: 2px solid #999;
  background: #ececec;
  box-shadow: 0 16px 48px rgba(0, 0, 0, .35);
  color: #000;
  font: 25px/33px Inter, sans-serif;
}

.bar {
  display: flex;
  align-items: center;
  height: 49px;
  border: 2px solid #ccc;
  border-bottom-width: 3px;
  background: #f1f1f1;
  color: #666;
}
.bar .end { margin-left: auto; }

.browser { position: absolute; left: 8px; top: 8px; width: 599px; }
.browser .bar { padding: 0 21px 0 8px; gap: 20px; }
.tree { padding-top: 11px; font-size: 23px; }
.tree li { display: flex; align-items: center; margin-bottom: 8px; }
.tree .l0 { padding-left: 37px; gap: 21px; }
.tree .l1 { padding-left: 73px; gap: 21px; }
.tree .l2 { padding-left: 144px; }
.row { display: flex; align-items: center; gap: 18px; height: 40px; padding: 0 20px 0 6px; background: #f2f2f2; }
.row span { padding-left: 10px; }
.row.doc { gap: 25px; padding-right: 14px; }
.row.views { gap: 28px; padding-right: 16px; }
.gear { color: #808080; }
.row.root { gap: 12px; padding-right: 12px; }
.root b { display: flex; align-items: center; gap: 30px; height: 32px; padding: 0 24px 0 8px; background: #999; color: #fff; }
.root input {
  appearance: none;
  width: 26px;
  height: 26px;
  margin: 0 0 0 -2px;
  border: 2px solid #444;
  border-radius: 50%;
  background: radial-gradient(circle, #333 0 5px, #c8ceda 6px, #fff);
}

.palette { position: absolute; right: 9px; top: 248px; width: 499px; }
.palette .bar { padding: 0 7px 0 22px; gap: 8px; }
.options { padding: 0 0 4px; border: 2px solid #ccc; background: #f1f1f1; font-size: 23px; }
.options h3 { display: flex; align-items: center; gap: 12px; height: 58px; padding-left: 18px; font-weight: 700; }
.opt { display: grid; grid-template-columns: 299px 1fr; align-items: center; justify-items: start; height: 60px; padding-left: 24px; }
.pair { display: flex; gap: 24px; }
.opt input {
  appearance: none;
  width: 26px;
  height: 26px;
  margin: 0 0 0 2px;
  border: 2px solid #3a3a3a;
  border-radius: 6px;
  background: linear-gradient(#fff, #b4b4b4);
}
.opt input:checked { background: linear-gradient(#aaa, #efefef); }
.opt input:checked::after {
  content: "";
  display: block;
  width: 18px;
  height: 18px;
  margin: 2px;
  background: #000;
  clip-path: polygon(0 58%, 12% 48%, 32% 70%, 88% 0, 100% 10%, 34% 100%);
}
.foot { display: flex; justify-content: flex-end; padding: 15px 21px 14px; border: 2px solid #ccc; border-top: 0; background: #f1f1f1; }
.foot button { padding: 3px 7px; border: 2px solid #b5b5b5; background: #ebebeb; color: #666; font-size: 24px; }

.viewcube { position: absolute; right: 75px; top: 75px; }
.viewcube::before, .viewcube::after { content: ""; position: absolute; }
.viewcube::before { left: 105px; top: 8px; width: 5px; height: 2px; background: #ff7076; }
.viewcube::after { left: 8px; top: 105px; width: 2px; height: 5px; background: #8080ff; }
.viewcube button {
  width: 105px;
  height: 105px;
  padding: 0;
  border: 1px solid #999;
  background: linear-gradient(#e6e8ec, #e6e8ec) center / 67px 67px no-repeat #efefef;
  box-shadow: 0 2px 20px rgba(0, 0, 0, .25);
  color: #9aa1a8;
  font-size: 25px;
  font-weight: 700;
}
.ax { position: absolute; font: 30px/30px "Liberation Sans", sans-serif; -webkit-text-stroke: 1px; }
.ax.y { left: -15px; top: -21px; color: #38f566; }
.ax.x { left: 111px; top: -6px; color: #ff7076; }
.ax.z { left: -1px; top: 107px; color: #8080ff; }

.comments { position: absolute; left: 8px; bottom: 10px; width: 599px; padding: 0 21px 0 48px; }
.navbar {
  position: absolute;
  left: 50%;
  bottom: 12px;
  display: flex;
  align-items: center;
  gap: 20px;
  height: 48px;
  margin-left: -237px;
  padding: 0 8px;
  background: #f1f1f1;
}
.navbar .drop { display: flex; align-items: center; gap: 5px; margin-right: -6px; }
.navbar .far, .navbar .drop:first-child { gap: 10px; }

/* timeline */
.timeline { display: flex; height: 100px; border-top: 4px solid #ccc; background: #f1f1f1; }
.transport { display: flex; align-items: center; width: 270px; padding-left: 8px; border-top: 2px solid #ccc; }
.transport button { width: 50px; display: flex; justify-content: center; }
.features { position: relative; display: flex; padding: 22px 0 0 14px; border-top: 2px solid #dedede; }
.features::after { content: ""; position: absolute; left: 38px; right: 22px; top: 78px; height: 4px; background: #ccc; }
.features li { width: 48px; height: 48px; padding: 8px; border-radius: 5px; }
.features li::after { content: ""; display: block; width: 4px; height: 8px; margin: 8px auto 0; background: #ccc; }
.features svg { width: 32px; height: 32px; opacity: .3; }
.features .live svg { opacity: 1; }
.features .warn { background: #e6e800; }
.marker { z-index: 1; margin: 20px 0 0 -12px; }
.prefs { flex: 1; padding-left: 32px; border-top: 2px solid #ccc; color: #808080; }
```
